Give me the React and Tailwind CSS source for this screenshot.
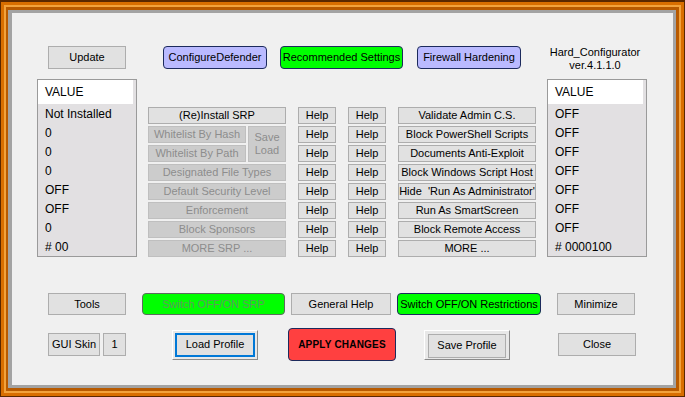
const btn = "flex items-center justify-center leading-none border whitespace-nowrap text-[11px]";
const on = "bg-[#e1e1e1] border-[#adadad] text-black";
const off = "bg-[#cccccc] border-[#bfbfbf] text-[#8d8d8d]";

function Btn({ className = "", disabled, children }) {
  return <div className={`${btn} ${disabled ? off : on} ${className}`}>{children}</div>;
}

function ValueList({ rows }) {
  return (
    <div className="w-[100px] h-[178px] border border-[#9a9a9a] bg-[#e2e0e2]">
      <div className="h-[24px] mr-[3px] bg-white flex items-center pl-[7px]">VALUE</div>
      {rows.map((r, i) => (
        <div key={i} className="h-[19px] flex items-center pl-[7px]">
          {r}
        </div>
      ))}
    </div>
  );
}

// 3D framed button (Load / Save Profile)
function Framed({ className = "", focus, children }) {
  return (
    <div
      className={`border border-t-white border-l-white border-b-[#8a8a8a] border-r-[#8a8a8a] bg-[#e8e8e8] p-[2px] text-[11px] ${className}`}
    >
      <div
        className={`h-full flex items-center justify-center leading-none bg-[#e1e1e1] ${
          focus ? "border-2 border-[#0078d7]" : "border border-[#adadad] m-[1px]"
        }`}
      >
        {children}
      </div>
    </div>
  );
}

export default function App() {
  const srp = [
    "Designated File Types",
    "Default Security Level",
    "Enforcement",
    "Block Sponsors",
    "MORE SRP ...",
  ];
  const restrictions = [
    "Validate Admin C.S.",
    "Block PowerShell Scripts",
    "Documents Anti-Exploit",
    "Block Windows Script Host",
    "Hide  'Run As Administrator'",
    "Run As SmartScreen",
    "Block Remote Access",
    "MORE ...",
  ];

  return (
    <div className="w-[685px] h-[397px] bg-[#5a2800] p-[1px] pt-[2px] font-['Liberation_Sans',Arial,sans-serif] text-[12px] text-black">
      <div className="h-full bg-[#d86e00] p-[3px]">
        <div className="h-full bg-[#f2a23c] p-[2px]">
          <div className="h-full bg-[#b85a00] pl-[2px] pr-[3px] pt-[3px] pb-[3px]">
            <div className="h-full bg-[#a3a3a3] pl-[4px] pr-[3px] py-[3px]">
              <div className="h-full bg-[#f0f0f0] flex flex-col pt-[33px]">
                {/* Top row */}
                <div className="flex h-[23px] items-start">
                  <Btn className="ml-[36px] w-[78px] h-[23px]">Update</Btn>
                  <div className={`${btn} ml-[37px] w-[104px] h-[23px] rounded-[4px] bg-[#babaff] border-[#1c2a5c]`}>
                    ConfigureDefender
                  </div>
                  <div className={`${btn} ml-[13px] w-[123px] h-[23px] rounded-[4px] bg-[#00ff00] border-[#1c2a5c]`}>
                    Recommended Settings
                  </div>
                  <div className={`${btn} ml-[14px] w-[104px] h-[23px] rounded-[4px] bg-[#babaff] border-[#1c2a5c]`}>
                    Firewall Hardening
                  </div>
                  <div className="ml-[24px] w-[100px] text-center text-[11px] leading-[12.5px]">
                    <div>Hard_Configurator</div>
                    <div>ver.4.1.1.0</div>
                  </div>
                </div>

                {/* Main section */}
                <div className="flex mt-[10px]">
                  <div className="ml-[25px]">
                    <ValueList rows={["Not Installed", "0", "0", "0", "OFF", "OFF", "0", "# 00"]} />
                  </div>

                  <div className="ml-[11px] mt-[28px] flex gap-[12px]">
                    {/* SRP column */}
                    <div className="w-[138px] flex flex-col gap-[2px]">
                      <Btn className="h-[17px]">(Re)Install SRP</Btn>
                      <div className="flex gap-[2px]">
                        <div className="w-[98px] flex flex-col gap-[2px]">
                          <Btn disabled className="h-[17px]">Whitelist By Hash</Btn>
                          <Btn disabled className="h-[17px]">Whitelist By Path</Btn>
                        </div>
                        <div className={`${off} border text-[11px] flex-1 h-[36px] flex flex-col items-center justify-center leading-[13px]`}>
                          <span>Save</span>
                          <span>Load</span>
                        </div>
                      </div>
                      {srp.map((t) => (
                        <Btn key={t} disabled className="h-[17px]">
                          {t}
                        </Btn>
                      ))}
                    </div>

                    {[0, 1].map((c) => (
                      <div key={c} className="w-[38px] flex flex-col gap-[2px]">
                        {restrictions.map((t) => (
                          <Btn key={t} className="h-[17px]">
                            Help
                          </Btn>
                        ))}
                      </div>
                    ))}

                    <div className="w-[138px] flex flex-col gap-[2px]">
                      {restrictions.map((t) => (
                        <Btn key={t} className="h-[17px] whitespace-pre">
                          {t}
                        </Btn>
                      ))}
                    </div>
                  </div>

                  <div className="ml-[11px]">
                    <ValueList rows={["OFF", "OFF", "OFF", "OFF", "OFF", "OFF", "OFF", "# 0000100"]} />
                  </div>
                </div>

                {/* Bottom row 1 */}
                <div className="flex mt-[36px] h-[22px]">
                  <Btn className="ml-[36px] w-[78px]">Tools</Btn>
                  <div className={`${btn} ml-[16px] w-[143px] rounded-[4px] bg-[#00ff00] border-[#5d6b5d] text-[#5f9a5f]`}>
                    Switch OFF/ON SRP
                  </div>
                  <Btn className="ml-[6px] w-[100px]">General Help</Btn>
                  <div className={`${btn} ml-[6px] w-[144px] rounded-[4px] bg-[#00ff00] border-[#1c2a5c]`}>
                    Switch OFF/ON Restrictions
                  </div>
                  <Btn className="ml-[16px] w-[78px]">Minimize</Btn>
                </div>

                {/* Bottom row 2 */}
                <div className="flex items-center mt-[13px] h-[33px]">
                  <Btn className="ml-[36px] w-[52px] h-[23px]">GUI Skin</Btn>
                  <Btn className="ml-[3px] w-[23px] h-[23px]">1</Btn>
                  <Framed focus className="ml-[46px] w-[86px] h-[30px]">
                    Load Profile
                  </Framed>
                  <div className={`${btn} ml-[30px] w-[108px] h-[33px] rounded-[4px] bg-[#ff4040] border-[#1c2a5c] font-bold !text-[10px] tracking-[0.2px]`}>
                    APPLY CHANGES
                  </div>
                  <Framed className="ml-[28px] w-[86px] h-[30px]">Save Profile</Framed>
                  <Btn className="ml-[48px] w-[78px] h-[23px]">Close</Btn>
                </div>
              </div>
            </div>
          </div>
        </div>
      </div>
    </div>
  );
}
